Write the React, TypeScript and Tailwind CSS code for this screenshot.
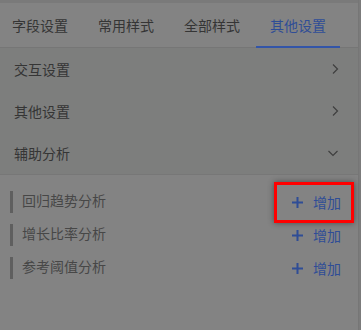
import React from "react";

const font = { fontFamily: '"Noto Sans CJK SC", "Noto Sans", sans-serif' };

function ChevronRight() {
  return (
    <svg width="8" height="12" viewBox="0 0 8 12" fill="none">
      <path d="M2 1.5 L6.5 6 L2 10.5" stroke="#3f3f3f" strokeWidth="1.2" />
    </svg>
  );
}

function ChevronDown() {
  return (
    <svg width="12" height="8" viewBox="0 0 12 8" fill="none">
      <path d="M1.5 2 L6 6.5 L10.5 2" stroke="#3f3f3f" strokeWidth="1.2" />
    </svg>
  );
}

function Plus() {
  return (
    <svg width="11" height="11" viewBox="0 0 11 11">
      <rect x="4.5" y="0" width="2" height="11" fill="#2f4d96" />
      <rect x="0" y="4.5" width="11" height="2" fill="#2f4d96" />
    </svg>
  );
}

function AddBtn() {
  return (
    <div className="flex items-center gap-[10px] text-[14px] text-[#2f4d96]">
      <Plus />
      <span>增加</span>
    </div>
  );
}

export default function App() {
  const rows = ["交互设置", "其他设置", "辅助分析"];
  const items = ["回归趋势分析", "增长比率分析", "参考阈值分析"];
  return (
    <div className="w-[361px] h-[330px] bg-[#7b7b7b] overflow-hidden" style={font}>
      <div className="w-[359px] h-[330px] bg-[#838383] border-r border-[#767676] flex flex-col">
        <div className="h-[3px] bg-[#7a7a7a]" />
        <div className="h-[45px] flex border-b border-[#767676] pl-[12px] text-[14px] text-[#353535]">
          <div className="flex items-center w-[86px]">字段设置</div>
          <div className="flex items-center w-[86px]">常用样式</div>
          <div className="flex items-center w-[72px]">全部样式</div>
          <div className="relative flex items-center justify-center w-[84px] text-[#2f4d96]">
            <span>其他设置</span>
            <div className="absolute left-0 right-0 bottom-[-1px] h-[2px] bg-[#3355a8]" />
          </div>
        </div>
        <div className="bg-[#7d7e7d] border-b border-[#777777]">
          {rows.map((r, i) => (
            <div key={r} className="h-[42px] flex items-center justify-between pl-[14px] pr-[19px] text-[14px] text-[#353535]">
              <span>{r}</span>
              {i < 2 ? <ChevronRight /> : <ChevronDown />}
            </div>
          ))}
        </div>
        <div className="flex flex-col pt-[16px] gap-[11px] pl-[10px] pr-[17px]">
          {items.map((it, i) => (
            <div key={it} className="flex items-center justify-between h-[22px]">
              <div className="flex items-center h-[22px]">
                <div className="w-[3px] h-[22px] bg-[#5f5f5f]" />
                <span className="ml-[9px] text-[14px] text-[#474747] leading-none -mt-[4px]">{it}</span>
              </div>
              {i === 0 ? (
                <div className="relative">
                  <div className="absolute left-[-18px] right-[-13px] top-[-10px] bottom-[-10px] border-[3px] border-[#ff0000] shadow-[0_0_6px_rgba(0,0,0,0.45)]" />
                  <AddBtn />
                </div>
              ) : (
                <AddBtn />
              )}
            </div>
          ))}
        </div>
      </div>
    </div>
  );
}
